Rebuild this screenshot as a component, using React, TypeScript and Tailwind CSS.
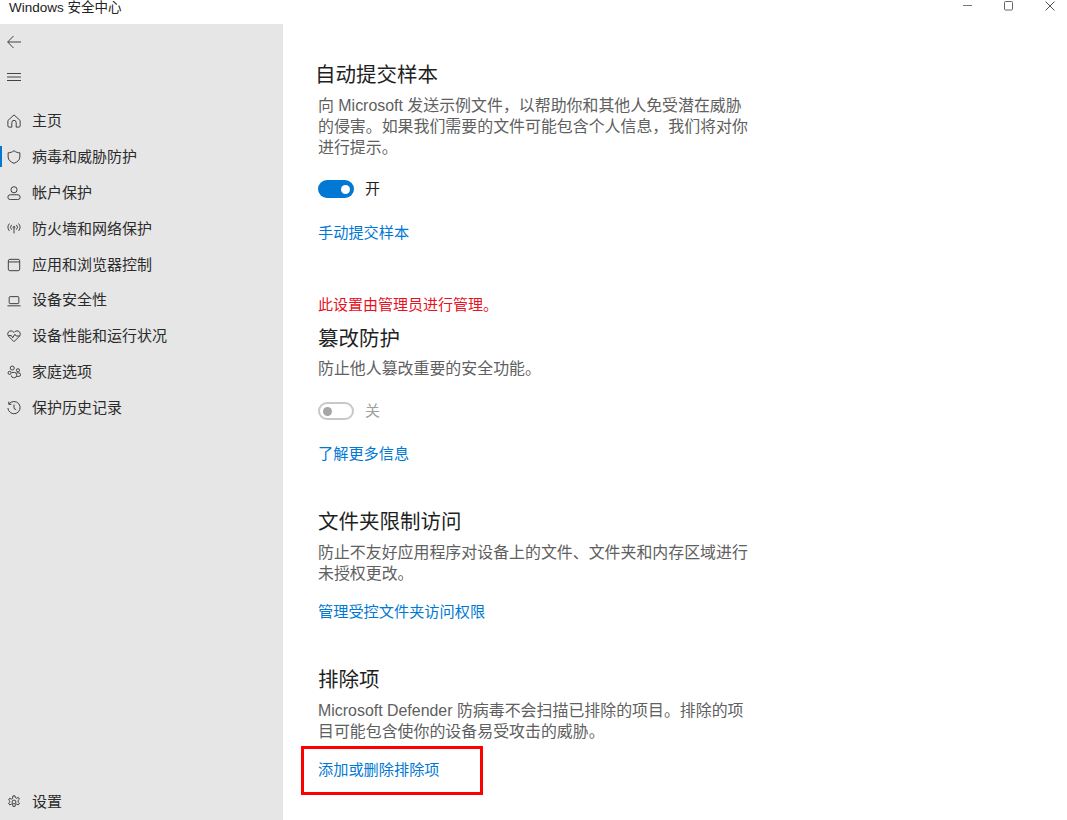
import React from "react";

const FF = "font-['Liberation_Sans','Noto_Sans_CJK_SC',sans-serif]";

const S = (p: { children: React.ReactNode }) => (
  <svg viewBox="0 0 16 16" fill="none" stroke="#3a3a3a" strokeWidth="1.1" className="w-[14px] h-[14px]">
    {p.children}
  </svg>
);

const nav: { label: string; icon: React.ReactNode; active?: boolean }[] = [
  { label: "主页", icon: <S><path d="M1 7.500 8 1l7 6.500v6a1.500 1.500 0 0 1-1.500 1.500H10.500V9.800a2.500 2.500 0 0 0-5 0V15H2.500A1.500 1.500 0 0 1 1 13.500z" /></S> },
  { label: "病毒和威胁防护", active: true, icon: <S><path d="M8 .8c2.200 1.700 4.400 2.400 6.700 2.400V8c0 3.400-2.900 5.800-6.700 7.200C4.200 13.800 1.300 11.400 1.300 8V3.200C3.600 3.200 5.800 2.500 8 .8z" /></S> },
  { label: "帐户保护", icon: <S><circle cx="8" cy="4.300" r="3.500" /><rect x="1" y="10" width="14" height="5.500" rx="2.700" /></S> },
  { label: "防火墙和网络保护", icon: <S><circle cx="8" cy="6" r="1" /><path d="M8 7v6M5.300 3.300a3.800 3.800 0 0 0 0 5.400M10.700 3.300a3.800 3.800 0 0 1 0 5.400M2.800 1.800a6.500 6.500 0 0 0 0 8.400M13.200 1.800a6.500 6.500 0 0 1 0 8.400" /></S> },
  { label: "应用和浏览器控制", icon: <S><rect x="1.500" y="1.500" width="13" height="13" rx="1.800" /><path d="M1.500 4.500h13" /></S> },
  { label: "设备安全性", icon: <S><rect x="2.500" y="3" width="11" height="8" rx="1" /><path d="M.5 13.500h15" /></S> },
  { label: "设备性能和运行状况", icon: <S><path d="M8 14.500 1.800 8.300C.1 6.500.7 3 3.300 2.300 5.100 1.800 6.900 2.600 8 4c1.100-1.400 2.900-2.200 4.700-1.700 2.600.7 3.200 4.200 1.500 6z" /><path d="M1.500 7.500h3.500l1.500 2.500 2.500-4 1.500 2h4" /></S> },
  { label: "家庭选项", icon: <S><circle cx="6" cy="3.500" r="2.300" /><circle cx="12.500" cy="6" r="1.800" /><circle cx="3" cy="9" r="1.800" /><path d="M5.500 8.500h3a2.500 2.500 0 0 1 2.500 2.500v1a2.500 2.500 0 0 1-2.500 2.500h-1A2.500 2.500 0 0 1 5 12M11 9h2.500a2 2 0 0 1 0 4H11" /></S> },
  { label: "保护历史记录", icon: <S><path d="M2.300 3.500A7 7 0 1 1 1 8M2 .8v3h3M8 4v4.500l2.500 1.500" /></S> },
];

function Gear() {
  return (
    <S>
      <circle cx="8" cy="8" r="2.200" />
      <path d="M6.800 1h2.400l.4 2 1.500.7 1.800-1 1.300 2-1.500 1.400v1.800l1.500 1.400-1.300 2-1.800-1-1.500.7-.4 2H6.800l-.4-2-1.500-.7-1.800 1-1.300-2 1.500-1.400V7.100L1.800 5.700l1.300-2 1.800 1 1.500-.7z" />
    </S>
  );
}

function Nav({ label, icon, active }: { label: string; icon: React.ReactNode; active?: boolean }) {
  return (
    <div className="relative flex items-center h-[35.85px] pl-[7px]">
      {active && <span className="absolute left-0 top-[7px] h-[21px] w-[2px] bg-[#0078d4]" />}
      <span className="w-[25px] flex">{icon}</span>
      <span className="text-[15px] text-[#2b2b2b]">{label}</span>
    </div>
  );
}

function Toggle({ on }: { on?: boolean }) {
  return (
    <div className="flex items-center h-[22px] gap-[11px]">
      {on ? (
        <span className="w-[36px] h-[18px] rounded-full bg-[#0078d4] flex items-center justify-end pr-[4px]">
          <span className="w-[9px] h-[9px] rounded-full bg-white" />
        </span>
      ) : (
        <span className="w-[36px] h-[18px] rounded-full border-2 border-[#c8c8c8] flex items-center pl-[3px]">
          <span className="w-[9px] h-[9px] rounded-full bg-[#a6a6a6]" />
        </span>
      )}
      <span className={"text-[15px] " + (on ? "text-[#222]" : "text-[#a0a0a0]")}>{on ? "开" : "关"}</span>
    </div>
  );
}

const H = ({ children, className }: { children: React.ReactNode; className: string }) => (
  <div className={"text-[20.5px] leading-[28px] text-[#1f1f1f] " + className}>{children}</div>
);
const P = ({ children, className }: { children: React.ReactNode; className: string }) => (
  <p className={"text-[15.93px] leading-[21px] text-[#606060] w-[434px] " + className}>{children}</p>
);
const L = ({ children, className }: { children: React.ReactNode; className: string }) => (
  <div className={"text-[15.2px] leading-[21px] text-[#0078d4] " + className}>{children}</div>
);

export default function App() {
  return (
    <div className={"w-[1067px] h-[820px] bg-white overflow-hidden flex flex-col " + FF}>
      <div className="h-[24px] shrink-0 flex items-start justify-between">
        <span className="pl-[9px] text-[13.5px] leading-[16px] text-[#222]">Windows 安全中心</span>
        <div className="flex items-start pt-[1px] pr-[12px] gap-[31px]">
          <svg width="10" height="10" viewBox="0 0 10 10" stroke="#777" fill="none" strokeWidth="1"><path d="M0 4.500h9" /></svg>
          <svg width="10" height="10" viewBox="0 0 10 10" stroke="#666" fill="none" strokeWidth="1"><rect x=".5" y=".5" width="8" height="8.500" rx="1" /></svg>
          <svg width="10" height="10" viewBox="0 0 10 10" stroke="#555" fill="none" strokeWidth="1"><path d="M.5 .5l9 9M9.500 .5l-9 9" /></svg>
        </div>
      </div>
      <div className="flex flex-1 min-h-0">
        <aside className="w-[283px] shrink-0 bg-[#e6e6e6] flex flex-col">
          <div className="h-[35px] pl-[7px] flex items-center">
            <svg width="14" height="14" viewBox="0 0 14 14" fill="none" stroke="#444" strokeWidth="1"><path d="M14 7H.7M6.500 1 .7 7l5.800 6" /></svg>
          </div>
          <div className="h-[36px] pl-[7px] flex items-center">
            <svg width="14" height="14" viewBox="0 0 14 14" fill="none" stroke="#444" strokeWidth="1"><path d="M0 3.500h14M0 7h14M0 10.500h14" /></svg>
          </div>
          <div className="mt-[8.500px]">
            {nav.map((n) => <Nav key={n.label} {...n} />)}
          </div>
          <div className="mt-auto">
            <Nav label="设置" icon={<Gear />} />
          </div>
        </aside>
        <main className="flex-1 pl-[35px] pt-[37px] flex flex-col items-start">
          <H className="-ml-[3px]">自动提交样本</H>
          <P className="mt-[6px]">向 Microsoft 发送示例文件，以帮助你和其他人免受潜在威胁的侵害。如果我们需要的文件可能包含个人信息，我们将对你进行提示。</P>
          <div className="mt-[20px]"><Toggle on /></div>
          <L className="mt-[22px]">手动提交样本</L>
          <div className="mt-[51px] text-[15px] leading-[21px] text-[#e81123]">此设置由管理员进行管理。</div>
          <H className="mt-[10px]">篡改防护</H>
          <P className="mt-[5px]">防止他人篡改重要的安全功能。</P>
          <div className="mt-[21px]"><Toggle /></div>
          <L className="mt-[21px]">了解更多信息</L>
          <H className="mt-[44px]">文件夹限制访问</H>
          <P className="mt-[6px]">防止不友好应用程序对设备上的文件、文件夹和内存区域进行未授权更改。</P>
          <L className="mt-[17px]">管理受控文件夹访问权限</L>
          <H className="mt-[44px]">排除项</H>
          <P className="mt-[6px]">Microsoft Defender 防病毒不会扫描已排除的项目。排除的项目可能包含使你的设备易受攻击的威胁。</P>
          <div className="relative mt-[17px]">
            <L className="">添加或删除排除项</L>
            <span className="absolute -left-[17px] -top-[13px] w-[182px] h-[49px] border-[3px] border-[#ff0000]" />
          </div>
        </main>
      </div>
    </div>
  );
}
